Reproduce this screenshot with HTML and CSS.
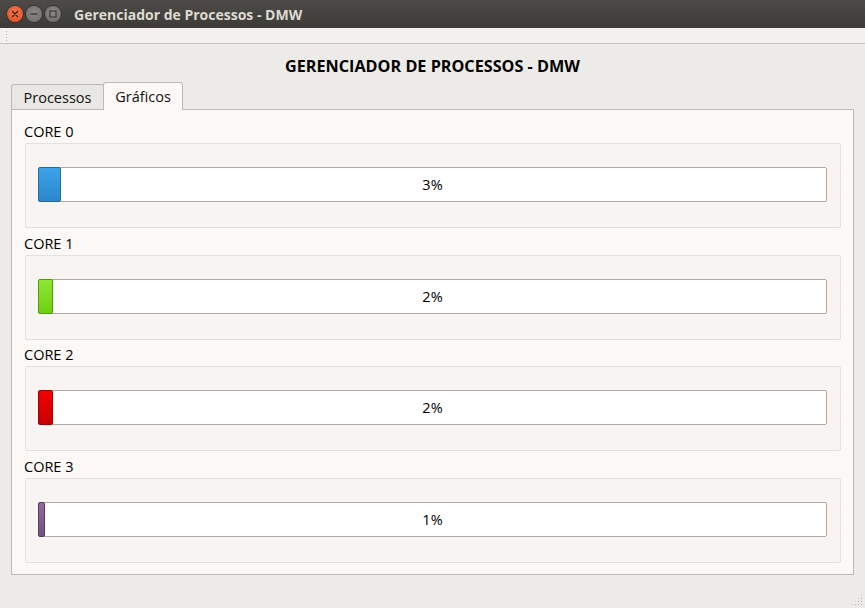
FILE: index.html
```html
<!DOCTYPE html>
<html lang="pt">
<head>
<meta charset="utf-8">
<title>Gerenciador de Processos - DMW</title>
<link rel="stylesheet" href="styles.css">
</head>
<body>
<div class="window">
  <div class="titlebar">
    <div class="buttons">
      <span class="btn close"><svg width="16" height="16" viewBox="0 0 16 16"><path d="M5.5 5.5 L10.5 10.5 M10.5 5.5 L5.5 10.5" stroke="#3a1a10" stroke-width="1.3" stroke-linecap="round"/></svg></span>
      <span class="btn"><svg width="16" height="16" viewBox="0 0 16 16"><path d="M4.5 8 H11.5" stroke="#3c3b37" stroke-width="1.4"/></svg></span>
      <span class="btn"><svg width="16" height="16" viewBox="0 0 16 16"><rect x="5" y="5" width="6" height="6" fill="none" stroke="#3c3b37" stroke-width="1.2"/></svg></span>
    </div>
    <span class="title">Gerenciador de Processos - DMW</span>
  </div>
  <div class="toolbar"><span class="grip"></span></div>
  <div class="main">
    <h1 class="heading">GERENCIADOR DE PROCESSOS - DMW</h1>
    <div class="tabs">
      <div class="tab">Processos</div>
      <div class="tab active">Gráficos</div>
    </div>
    <div class="panel">
      <div class="core">
        <div class="label">CORE 0</div>
        <div class="box">
          <div class="bar"><div class="chunk blue" style="width:23px"></div><span class="pct">3%</span></div>
        </div>
      </div>
      <div class="core">
        <div class="label">CORE 1</div>
        <div class="box">
          <div class="bar"><div class="chunk green" style="width:15px"></div><span class="pct">2%</span></div>
        </div>
      </div>
      <div class="core">
        <div class="label">CORE 2</div>
        <div class="box">
          <div class="bar"><div class="chunk red" style="width:15px"></div><span class="pct">2%</span></div>
        </div>
      </div>
      <div class="core">
        <div class="label">CORE 3</div>
        <div class="box">
          <div class="bar"><div class="chunk purple" style="width:7px"></div><span class="pct">1%</span></div>
        </div>
      </div>
    </div>
    <span class="resize"></span>
  </div>
</div>
</body>
</html>
```
FILE: styles.css
```css
* { box-sizing: border-box; }
html, body { margin: 0; padding: 0; }
body {
  width: 865px;
  height: 608px;
  overflow: hidden;
  font-family: "Open Sans", "DejaVu Sans", sans-serif;
  background: #edebe8;
  color: #111;
}
.window { width: 865px; height: 608px; display: flex; flex-direction: column; }
.titlebar {
  height: 28px;
  background: linear-gradient(#4c4b47, #3c3b37);
  display: flex;
  align-items: center;
  padding-left: 7px;
}
.buttons { display: flex; gap: 3px; }
.btn {
  width: 16px; height: 16px; border-radius: 50%;
  background: radial-gradient(circle at 50% 40%, #8a8985, #6b6a66);
  box-shadow: 0 0 0 1px #35342f;
  display: flex;
}
.btn.close { background: radial-gradient(circle at 50% 40%, #f47a4f, #e0471f); }
.title {
  margin-left: 13px;
  color: #dfdbd2;
  font-weight: bold;
  font-size: 14px;
}
.toolbar {
  height: 16px;
  background: #f2f1ef;
  border-bottom: 1px solid #c8c5c0;
  position: relative;
}
.grip {
  position: absolute; left: 5px; top: 2px;
  width: 3px; height: 12px;
  background-image: radial-gradient(circle, #b5b2ad 0.8px, transparent 1px);
  background-size: 3px 3px;
}
.main { flex: 1; display: flex; flex-direction: column; padding: 0 11px; position: relative; }
.heading {
  margin: 12px 0 0;
  height: 20px;
  line-height: 20px;
  text-align: center;
  font-size: 16.2px;
  font-weight: bold;
  color: #000;
}
.tabs { display: flex; align-items: flex-end; margin-top: 5px; height: 28px; }
.tab {
  height: 25px;
  width: 93px;
  border: 1px solid #bdbab5;
  border-bottom: none;
  border-radius: 3px 3px 0 0;
  background: #e9e7e3;
  font-size: 14.5px;
  text-align: center;
  line-height: 26px;
  color: #111;
}
.tab.active {
  height: 28px;
  width: 80px;
  margin-left: -1px;
  margin-bottom: -1px;
  background: #fbf8f5;
  line-height: 28px;
  position: relative;
  z-index: 1;
}
.panel {
  height: 466px;
  background: #fbf8f5;
  border: 1px solid #bdbab5;
  padding: 12px 12px 0 13px;
  display: flex;
  flex-direction: column;
  gap: 5.67px;
}
.core { display: flex; flex-direction: column; gap: 1px; }
.label { height: 20px; line-height: 20px; font-size: 14.5px; color: #000; margin-left: -1px; }
.box {
  height: 85px;
  background: #f7f4f1;
  border: 1px solid #e4e1dd;
  border-radius: 2px;
  padding: 23px 13px 0 12px;
}
.bar {
  height: 35px;
  background: #fff;
  border: 1px solid #aeaaa5;
  border-radius: 2px;
  position: relative;
  display: flex;
  align-items: center;
  justify-content: center;
}
.chunk {
  position: absolute; left: -1px; top: -1px; bottom: -1px;
  border-radius: 2px;
  border: 1px solid;
}
.chunk.blue { background: linear-gradient(#3ba3e9, #2b87cd); border-color: #2a6a9a; }
.chunk.green { background: linear-gradient(#8fe832, #6fcf14); border-color: #4f9a0e; }
.chunk.red { background: linear-gradient(#f40000, #c80000); border-color: #9c0000; }
.chunk.purple { background: linear-gradient(#8e6b9c, #75537f); border-color: #5a3766; }
.pct { font-size: 14.5px; color: #000; position: relative; }
.resize {
  position: absolute; right: 2px; bottom: 2px;
  width: 12px; height: 12px;
  background-image: radial-gradient(circle, #b5b2ad 0.8px, transparent 1px);
  background-size: 3px 3px;
  clip-path: polygon(100% 0, 100% 100%, 0 100%);
}
```
